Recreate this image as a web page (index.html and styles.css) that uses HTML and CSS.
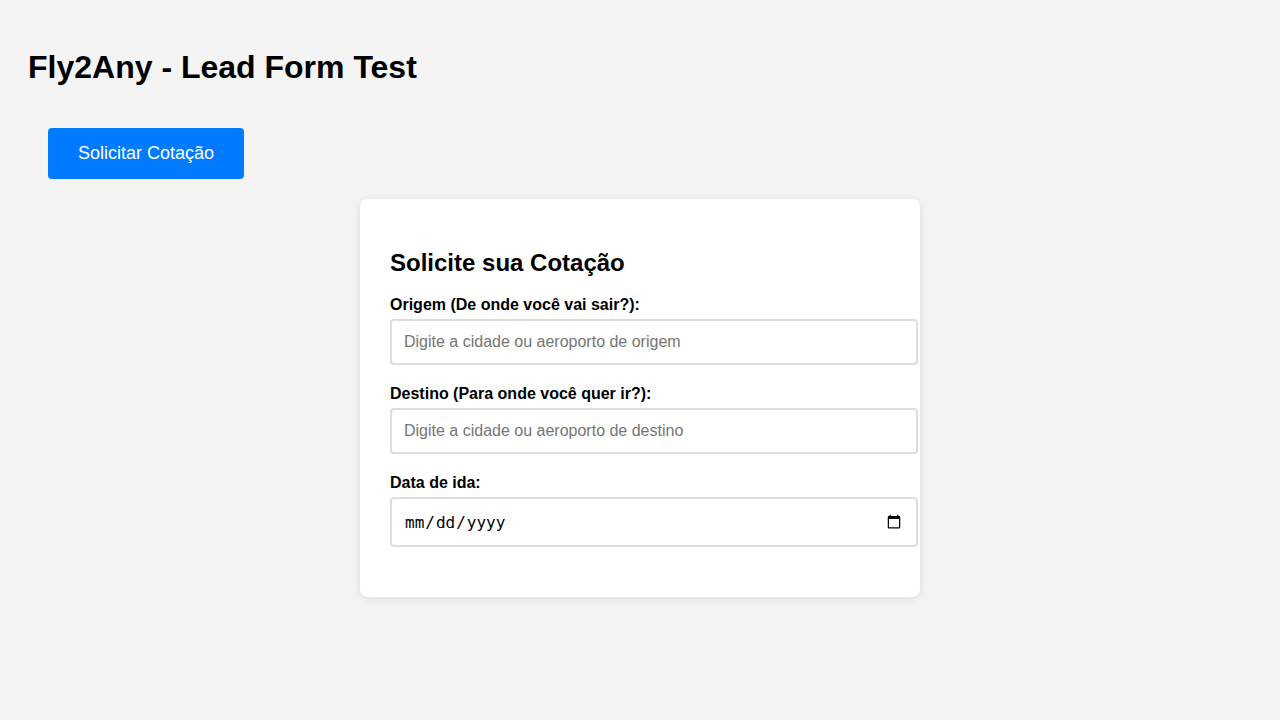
FILE: index.html
```html
<!DOCTYPE html>
<html lang="pt-BR">
<head>
<meta charset="utf-8">
<title>Fly2Any - Lead Form Test</title>
<link rel="stylesheet" href="styles.css">
</head>
<body>
<h1 class="page-title">Fly2Any - Lead Form Test</h1>
<div class="cta-wrap">
  <button class="cta-button" type="button">Solicitar Cotação</button>
</div>
<div class="card">
  <h2 class="card-title">Solicite sua Cotação</h2>
  <div class="form-group">
    <label class="field-label" for="origem">Origem (De onde você vai sair?):</label>
    <input class="field-input" id="origem" type="text" placeholder="Digite a cidade ou aeroporto de origem">
  </div>
  <div class="form-group">
    <label class="field-label" for="destino">Destino (Para onde você quer ir?):</label>
    <input class="field-input" id="destino" type="text" placeholder="Digite a cidade ou aeroporto de destino">
  </div>
  <div class="form-group">
    <label class="field-label" for="data">Data de ida:</label>
    <input class="field-input date-input" id="data" type="date">
  </div>
</div>
</body>
</html>
```
FILE: styles.css
```css
html, body {
  margin: 0;
}
body {
  padding: 28px;
  background: #f4f4f4;
  font-family: "Liberation Sans", Arial, sans-serif;
  color: #000;
}
.page-title {
  font-size: 32px;
  font-weight: bold;
  margin: 21.44px 0 0;
  line-height: 36.8px;
}
.cta-wrap {
  display: flex;
  padding: 41.44px 20px 20px;
}
.cta-button {
  padding: 15px 30px;
  font-family: "Liberation Sans", Arial, sans-serif;
  font-size: 18px;
  line-height: 21px;
  color: #fff;
  background: #007bff;
  border: none;
  border-radius: 4px;
  cursor: pointer;
}
.card {
  max-width: 500px;
  margin: 0 auto;
  padding: 30px;
  background: #fff;
  border-radius: 8px;
  box-shadow: 0 2px 10px rgba(0, 0, 0, 0.1);
}
.card-title {
  font-size: 24px;
  font-weight: bold;
  margin: 19.92px 0;
}
.form-group {
  margin-bottom: 20px;
}
.field-label {
  display: block;
  font-weight: bold;
  font-size: 16px;
  margin-bottom: 5px;
}
.field-input {
  display: block;
  width: 100%;
  box-sizing: content-box;
  padding: 12px;
  margin: 0;
  border: 2px solid #ddd;
  border-radius: 4px;
  font-family: "Liberation Sans", Arial, sans-serif;
  font-size: 16px;
  background: #fff;
  color: #000;
}
.field-input::placeholder {
  color: #757575;
}
.date-input {
  font-family: "DejaVu Sans Mono", monospace;
  font-size: 16px;
  padding: 12.5px 12px;
}
```
